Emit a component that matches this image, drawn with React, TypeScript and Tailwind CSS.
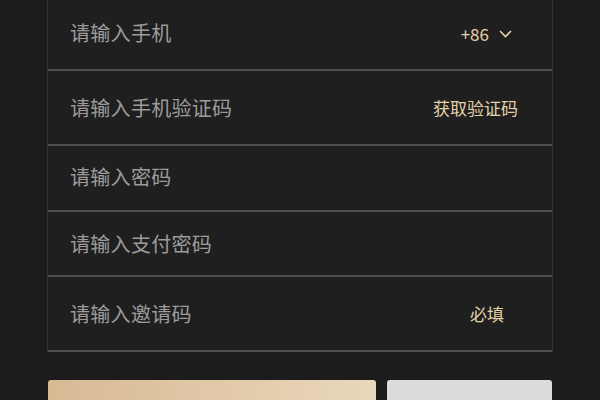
import React from "react";

const font = { fontFamily: '"Noto Sans CJK SC", "Noto Sans", sans-serif' };

const Chevron = () => (
  <svg width="13" height="8" viewBox="0 0 13 8" fill="none" className="ml-[10px]">
    <path d="M1 1l5.5 5.5L12 1" stroke="#e6d2a8" strokeWidth="1.6" />
  </svg>
);

const Row = ({
  label,
  right,
  className,
}: {
  label: string;
  right?: React.ReactNode;
  className: string;
}) => (
  <div
    className={`flex items-center justify-between border-b-2 border-[#4d4d4d] pl-[22px] ${className}`}
  >
    <span className="text-[20px] text-[#9c9c9c] tracking-[0.3px]">{label}</span>
    {right}
  </div>
);

export default function App() {
  return (
    <div
      className="w-[600px] h-[400px] overflow-hidden bg-[#1c1c1c] px-[47px]"
      style={font}
    >
      <div className="border-x border-[#363636] bg-[#1f1f1f]">
        <Row
          label="请输入手机"
          className="h-[71px] pb-[4px]"
          right={
            <div className="flex items-center pr-[40px] pt-[2px] text-[17px] text-[#e6d2a8]">
              +86
              <Chevron />
            </div>
          }
        />
        <Row
          label="请输入手机验证码"
          className="h-[75px]"
          right={
            <span className="pr-[34px] text-[17px] text-[#e6d2a8]">获取验证码</span>
          }
        />
        <Row label="请输入密码" className="h-[66px] pb-[2px]" />
        <Row label="请输入支付密码" className="h-[65px]" />
        <Row
          label="请输入邀请码"
          className="h-[75px]"
          right={
            <span className="pr-[48px] text-[17px] text-[#e6d2a8]">必填</span>
          }
        />
      </div>
      <div className="mt-[28px] flex gap-[11px] pl-[1px]">
        <div className="h-[50px] w-[328px] rounded-[3px] bg-gradient-to-r from-[#d8b994] to-[#ead8bb]" />
        <div className="h-[50px] w-[165px] rounded-[3px] bg-[#dcdcdc]" />
      </div>
    </div>
  );
}
